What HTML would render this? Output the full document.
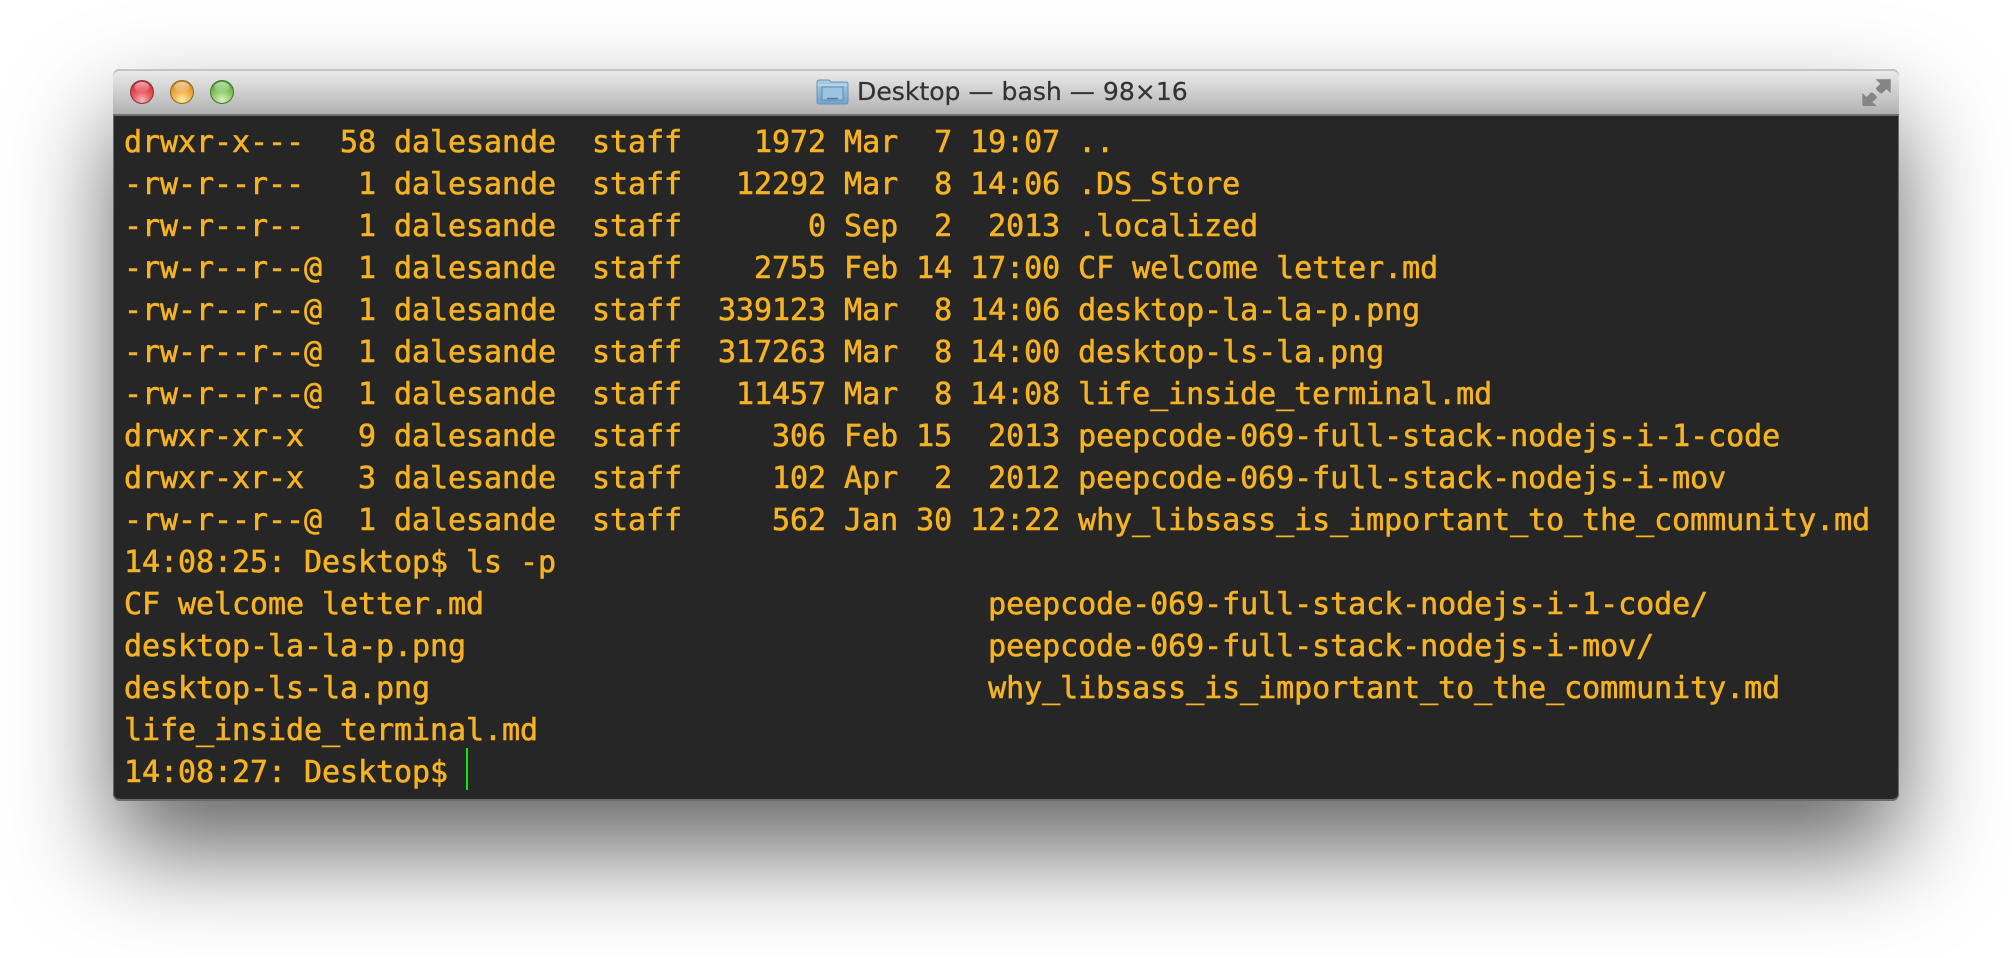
<!DOCTYPE html>
<html><head><meta charset="utf-8"><style>
html,body{margin:0;padding:0;width:2012px;height:958px;background:#fff;overflow:hidden}
#win{position:absolute;left:113px;top:69px;width:1786px;height:732px;border-radius:7px;box-shadow:0 50px 100px rgba(0,0,0,.6);background:#262626}
#bar{position:absolute;left:0;top:0;width:1786px;height:47px;box-sizing:border-box;border-radius:7px 7px 0 0;border-top:2px solid #c4c4c4;border-bottom:2px solid #6f6f6f;background:linear-gradient(#eaeaea,#dcdcdc 25%,#b2b2b2)}
#edge{position:absolute;left:0;top:47px;width:1786px;height:685px;box-sizing:border-box;border:solid #6a6a6a;border-width:0 1px 2px 1px;border-radius:0 0 7px 7px}
#title{position:absolute;left:857px;top:74px;font:25.1px/36px "DejaVu Sans",sans-serif;color:#333;white-space:pre;-webkit-text-stroke:.25px #333}
#term{position:absolute;left:124px;top:122px;margin:0;font:30px/42px "DejaVu Sans Mono","Liberation Mono",monospace;letter-spacing:-.06px;color:#f5b224;white-space:pre;-webkit-text-stroke:.6px #f5b224}
#cur{position:absolute;left:466px;top:748px;width:2px;height:42px;background:#0be80b}
svg{position:absolute}
</style></head><body>
<div id="win"><div id="bar"></div><div id="edge"></div></div>
<svg style="left:125px;top:75px" width="115" height="34" viewBox="0 0 115 34">
<defs>
<radialGradient id="r" cx=".5" cy=".85" r=".85"><stop offset="0" stop-color="#f4b8bc"/><stop offset=".45" stop-color="#ea5a60"/><stop offset="1" stop-color="#c8222a"/></radialGradient>
<radialGradient id="o" cx=".5" cy=".85" r=".85"><stop offset="0" stop-color="#fbeca0"/><stop offset=".45" stop-color="#f3b44e"/><stop offset="1" stop-color="#cf7d14"/></radialGradient>
<radialGradient id="g" cx=".5" cy=".85" r=".85"><stop offset="0" stop-color="#dcefc4"/><stop offset=".45" stop-color="#93cf6c"/><stop offset="1" stop-color="#4b9a2c"/></radialGradient>
<linearGradient id="h" x1="0" y1="0" x2="0" y2="1"><stop offset="0" stop-color="#fff" stop-opacity=".6"/><stop offset="1" stop-color="#fff" stop-opacity=".05"/></linearGradient>
</defs>
<circle cx="17" cy="17" r="11.5" fill="url(#r)" stroke="#7c3a40" stroke-width="1"/>
<ellipse cx="17" cy="12" rx="7.5" ry="5" fill="url(#h)"/>
<circle cx="57" cy="17" r="11.5" fill="url(#o)" stroke="#8a6a30" stroke-width="1"/>
<ellipse cx="57" cy="12" rx="7.5" ry="5" fill="url(#h)"/>
<circle cx="97" cy="17" r="11.5" fill="url(#g)" stroke="#3d7a2c" stroke-width="1"/>
<ellipse cx="97" cy="12" rx="7.5" ry="5" fill="url(#h)"/>
</svg>
<svg style="left:816px;top:78px" width="33" height="27" viewBox="0 0 33 27">
<defs><linearGradient id="f" x1="0" y1="0" x2="0" y2="1"><stop offset="0" stop-color="#a9cde6"/><stop offset="1" stop-color="#6fa3cc"/></linearGradient></defs>
<path d="M1 4.5 Q1 2 3 2 H12 Q14 2 15 4 H30 Q32 4 32 6 V24 Q32 26 30 26 H3 Q1 26 1 24Z" fill="url(#f)" stroke="#6c95b6" stroke-width="1"/>
<path d="M1.5 7 H31.5" stroke="#cfe3f2" stroke-width="1"/>
<rect x="6" y="9" width="21" height="13" fill="#9cc3df" stroke="#5f8db1" stroke-width="1"/>
<path d="M11 20.5 H22" stroke="#517fa3" stroke-width="1.5"/>
</svg>
<div id="title">Desktop — bash — 98×16</div>
<svg style="left:1861px;top:78px" width="31" height="31" viewBox="0 0 31 31">
<path d="M14 1 H30 V16 L25.5 11.5 L21 16 Q16 15 14.5 10 L19 6Z" fill="#858585" stroke="#d4d4d4" stroke-width=".6"/>
<path d="M1 14 L5.5 18.5 L10 14 Q15 15 16.5 20 L12 24 L17 28.5 H1Z" fill="#858585" stroke="#d4d4d4" stroke-width=".6"/>
</svg>
<pre id="term">drwxr-x---  58 dalesande  staff    1972 Mar  7 19:07 ..
-rw-r--r--   1 dalesande  staff   12292 Mar  8 14:06 .DS_Store
-rw-r--r--   1 dalesande  staff       0 Sep  2  2013 .localized
-rw-r--r--@  1 dalesande  staff    2755 Feb 14 17:00 CF welcome letter.md
-rw-r--r--@  1 dalesande  staff  339123 Mar  8 14:06 desktop-la-la-p.png
-rw-r--r--@  1 dalesande  staff  317263 Mar  8 14:00 desktop-ls-la.png
-rw-r--r--@  1 dalesande  staff   11457 Mar  8 14:08 life_inside_terminal.md
drwxr-xr-x   9 dalesande  staff     306 Feb 15  2013 peepcode-069-full-stack-nodejs-i-1-code
drwxr-xr-x   3 dalesande  staff     102 Apr  2  2012 peepcode-069-full-stack-nodejs-i-mov
-rw-r--r--@  1 dalesande  staff     562 Jan 30 12:22 why_libsass_is_important_to_the_community.md
14:08:25: Desktop$ ls -p
CF welcome letter.md                            peepcode-069-full-stack-nodejs-i-1-code/
desktop-la-la-p.png                             peepcode-069-full-stack-nodejs-i-mov/
desktop-ls-la.png                               why_libsass_is_important_to_the_community.md
life_inside_terminal.md
14:08:27: Desktop$ </pre>
<div id="cur"></div>
</body></html>
